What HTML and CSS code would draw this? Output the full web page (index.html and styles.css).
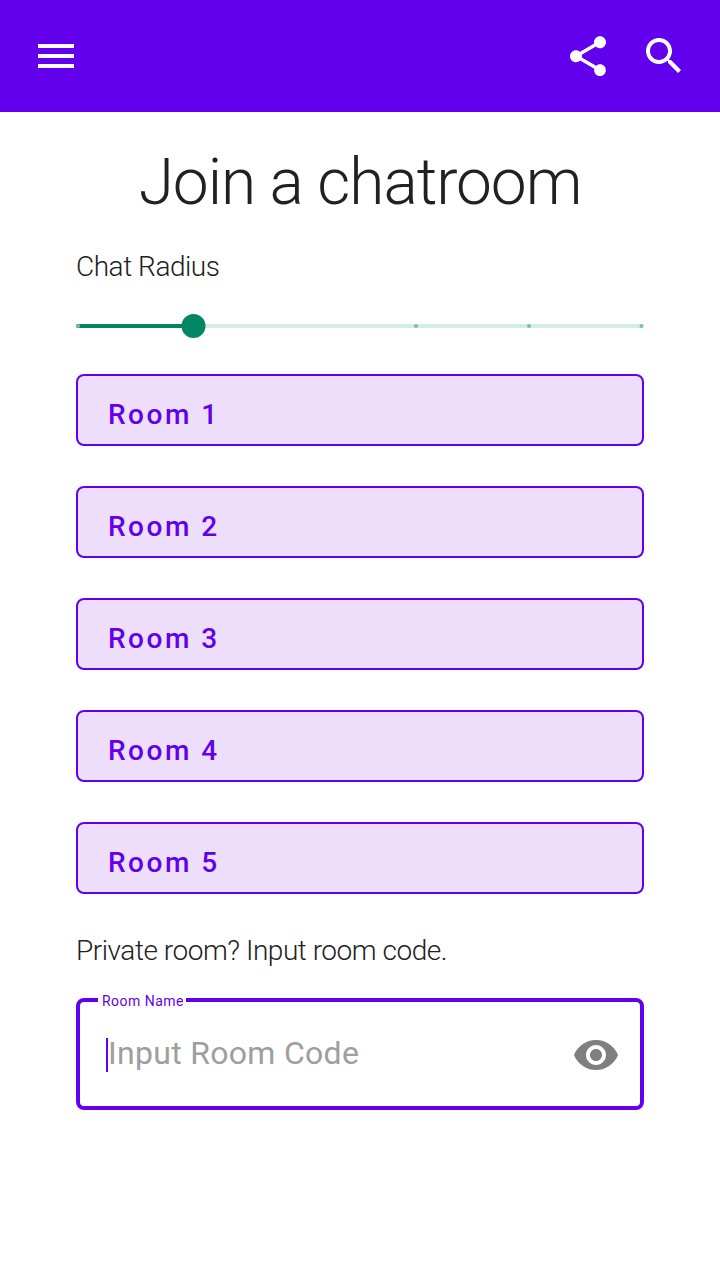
FILE: index.html
```html
<!DOCTYPE html>
<html lang="en">
<head>
<meta charset="utf-8">
<title>Join a chatroom</title>
<link rel="stylesheet" href="styles.css">
</head>
<body>
<header class="app-bar">
  <svg class="icon-menu" viewBox="0 0 36 24"><path d="M0 0h36v4H0zM0 10h36v4H0zM0 20h36v4H0z"/></svg>
  <svg class="icon-share" viewBox="3 1.92 18 20"><path d="M18 16.08c-.76 0-1.44.3-1.96.77L8.91 12.7c.05-.23.09-.46.09-.7s-.04-.47-.09-.7l7.05-4.11c.54.5 1.25.81 2.04.81 1.66 0 3-1.34 3-3s-1.34-3-3-3-3 1.34-3 3c0 .24.04.47.09.7L8.04 9.81C7.5 9.31 6.79 9 6 9c-1.66 0-3 1.34-3 3s1.34 3 3 3c.79 0 1.5-.31 2.04-.81l7.12 4.16c-.05.21-.08.43-.08.65 0 1.61 1.31 2.92 2.92 2.92s2.92-1.31 2.92-2.92-1.31-2.92-2.92-2.92z"/></svg>
  <svg class="icon-search" viewBox="3 3 17.49 17.49"><path d="M15.5 14h-.79l-.28-.27C15.41 12.59 16 11.11 16 9.5 16 5.91 13.09 3 9.5 3S3 5.91 3 9.5 5.91 16 9.5 16c1.61 0 3.09-.59 4.23-1.57l.27.28v.79l5 4.99L20.49 19l-4.99-5zm-6 0C7.01 14 5 11.99 5 9.5S7.01 5 9.5 5 14 7.01 14 9.5 11.99 14 9.5 14z"/></svg>
</header>
<main class="content">
  <h1 class="title">Join a chatroom</h1>
  <p class="label">Chat Radius</p>
  <svg class="slider" viewBox="0 0 568 24">
    <rect class="track" y="10" width="567.500" height="4" rx="2"/>
    <rect class="fill" y="10" width="118" height="4" rx="2"/>
    <circle class="tick" cx="2" cy="12" r="2"/><circle class="tick" cx="340" cy="12" r="2"/><circle class="tick" cx="453" cy="12" r="2"/><circle class="tick" cx="565.500" cy="12" r="2"/>
    <circle class="fill" cx="117.500" cy="12" r="12"/>
  </svg>
  <div class="rooms">
    <button class="room">Room 1</button>
    <button class="room">Room 2</button>
    <button class="room">Room 3</button>
    <button class="room">Room 4</button>
    <button class="room">Room 5</button>
  </div>
  <p class="label private">Private room? Input room code.</p>
  <div class="field">
    <span class="field-label">Room Name</span>
    <span class="caret"></span>
    <span class="placeholder">Input Room Code</span>
    <svg class="icon-eye" viewBox="1 4.5 22 15"><path d="M12 4.500C7 4.500 2.730 7.610 1 12c1.730 4.390 6 7.500 11 7.500s9.270-3.110 11-7.500c-1.730-4.390-6-7.500-11-7.500zM12 17c-2.760 0-5-2.240-5-5s2.240-5 5-5 5 2.240 5 5-2.240 5-5 5zm0-8c-1.660 0-3 1.340-3 3s1.340 3 3 3 3-1.340 3-3-1.340-3-3-3z"/></svg>
  </div>
</main>
</body>
</html>
```
FILE: styles.css
```css
* { box-sizing: border-box; }
body { margin: 0; background: #fff; color: #212121; font-family: Roboto, sans-serif; }
svg { display: block; flex: none; }
.app-bar { height: 112px; padding: 0 39px 0 38px; display: flex; align-items: center; background: #6200ee; fill: #fff; }
.icon-menu { width: 36px; height: 24px; }
.icon-share { width: 36px; height: 40px; margin-left: auto; }
.icon-search { width: 35px; height: 35px; margin: 0 0 2px 40px; }
.content { padding: 36px 76px 0; }
.title { margin: 0 -20px; height: 92px; line-height: 70px; font-size: 64px; font-weight: 300; letter-spacing: -1.07px; text-align: center; white-space: nowrap; }
.label { margin: 0; height: 74px; line-height: 54px; font-size: 28px; font-weight: 300; letter-spacing: -0.47px; white-space: nowrap; }
.slider { width: 568px; height: 24px; }
.track { fill: #d5ebe3; }
.fill { fill: #018764; }
.tick { fill: #79bfac; }
.rooms { display: grid; gap: 40px; margin-top: 36px; }
.room { width: 567.500px; height: 72px; padding: 10px 30px 0; border: 2px solid #6200ee; border-radius: 8px; background: #eddffc; color: #6200ee; font: 500 28px/32px Roboto, sans-serif; letter-spacing: 2.500px; text-align: left; }
.private { margin-top: 30px; }
.field { position: relative; width: 567.500px; height: 112px; display: flex; align-items: center; padding: 2px 22px 0 26px; border: 4px solid #6200ee; border-radius: 8px; }
.field-label { position: absolute; left: 18px; top: -9px; padding: 0 2px 0 4px; background: #fff; color: #6200ee; font-size: 14px; line-height: 16px; letter-spacing: .47px; white-space: nowrap; }
.caret { width: 2px; height: 34px; background: #6200ee; }
.placeholder { margin-bottom: 4px; color: #9e9e9e; font-size: 32px; line-height: 38px; letter-spacing: .3px; white-space: nowrap; }
.icon-eye { width: 44px; height: 30px; margin-left: auto; fill: #7f7f7f; }
```
